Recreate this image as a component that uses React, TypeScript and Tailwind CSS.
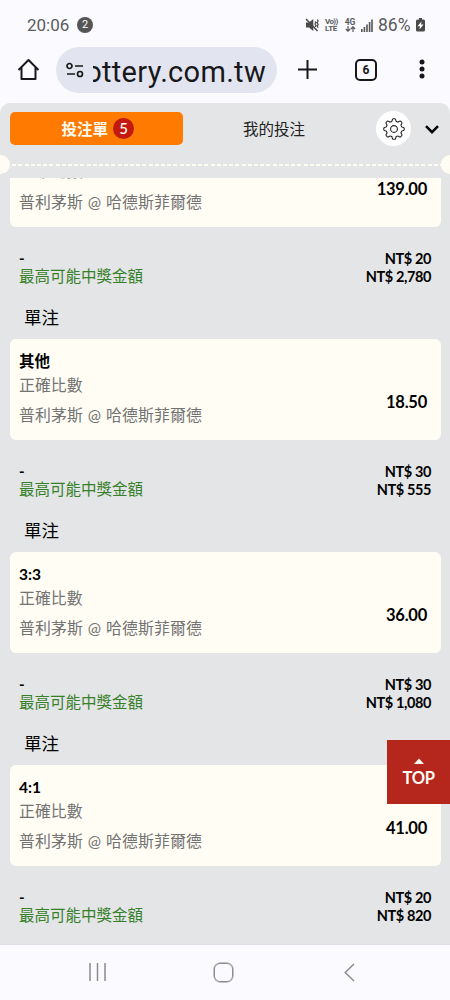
type Bet = {
  pick?: string
  odds: string
  stake: string
  payout: string
}

const bets: Bet[] = [
  { odds: '139.00', stake: 'NT$ 20', payout: 'NT$ 2,780' },
  { pick: '其他', odds: '18.50', stake: 'NT$ 30', payout: 'NT$ 555' },
  { pick: '3:3', odds: '36.00', stake: 'NT$ 30', payout: 'NT$ 1,080' },
  { pick: '4:1', odds: '41.00', stake: 'NT$ 20', payout: 'NT$ 820' },
]

function StatusBar() {
  return (
    <div className="flex h-[47px] items-center justify-between pt-[3px] pr-[25px] pl-[27px] font-['Roboto',sans-serif] text-[#5a5a5a]">
      <div className="flex items-center gap-[6px]">
        <span className="w-[44px] text-[17px] leading-[20px] whitespace-nowrap">20:06</span>
        <span className="flex h-4 w-4 items-center justify-center rounded-full bg-[#555] text-[11px] text-white">2</span>
      </div>
      <div className="flex items-center">
        <svg className="mr-[6px]" width="14" height="14" viewBox="0 0 14 14" fill="none" stroke="#4a4a4a" strokeWidth="1.2">
          <path d="M1 4.5h3L8.3 1v12L4 9.5H1z" fill="#4a4a4a" stroke="none" />
          <path d="M1 1l11.5 12" strokeWidth="1.5" />
          <path d="M10 3.5l1 1.2-1 1.3 1 1.4-1 1.4M12.2 1.5l1 1.6-1 1.6 1 1.7-1 1.7 1 1.6" />
        </svg>
        <div className="mr-[5px] w-[14px] text-[8px] leading-[7px] font-bold">
          <div className="tracking-[-0.6px] whitespace-nowrap">Vo))</div>
          <div className="tracking-[-0.3px]">LTE</div>
        </div>
        <div className="mr-[5px] flex w-[12px] flex-col items-center text-[8.5px] leading-[8px] font-bold">
          4G
          <svg width="11" height="6" viewBox="0 0 11 6" fill="none" stroke="#5a5a5a" strokeWidth="1.2">
            <path d="M3 0v5M.8 3L3 5.2 5.2 3M8 6V1M5.8 3L8 .8 10.2 3" />
          </svg>
        </div>
        <svg className="mr-[5px]" width="12" height="13" viewBox="0 0 12 13" fill="#555">
          <path d="M0 10h1.6v3H0zM2.6 8h1.6v5H2.6zM5.2 5.5h1.6V13H5.2zM7.8 3h1.6v10H7.8zM10.2 0.5h1.6V13h-1.6z" />
        </svg>
        <span className="w-[38px] text-[17.5px] leading-[20px] whitespace-nowrap">86%</span>
        <svg width="9" height="14" viewBox="0 0 9 14">
          <path d="M3 0h3v1.5h1.5Q9 1.500 9 3v9q0 1.500-1.500 1.500h-6Q0 13.500 0 12V3q0-1.500 1.500-1.500H3z" fill="#4a4a4a" />
          <path d="M5.500 3.500L1.500 8.300h2.500L3.500 11.500l4-4.900H5z" fill="#fff" />
        </svg>
      </div>
    </div>
  )
}

function BrowserBar() {
  return (
    <div className="flex h-[56px] items-start text-[#18181b]">
      <svg className="mt-[11px] ml-[17px]" width="23" height="23" viewBox="0 0 23 23" fill="none" stroke="currentColor" strokeWidth="2" strokeLinejoin="round">
        <path d="M1.500 12L11.500 2l10 10M4.500 9.500V21h14V9.500" />
      </svg>
      <div className="ml-[16px] flex h-[46px] w-[221px] items-center rounded-full bg-[#e2e5ef] pl-[10px]">
        <svg width="18" height="16" viewBox="0 0 18 16" fill="none" stroke="currentColor" strokeWidth="1.7">
          <circle cx="3.500" cy="4" r="2.500" />
          <path d="M9 4h8M1 12h8" />
          <circle cx="14" cy="12" r="2.500" />
        </svg>
        <div className="ml-[9px] flex w-[173px] justify-end overflow-hidden pt-[4px] font-['Roboto',sans-serif] text-[29px] leading-[36px]">
          <span className="tracking-[0.3px]">ottery.com.tw</span>
        </div>
      </div>
      <svg className="mt-[13px] ml-[21px]" width="19" height="19" viewBox="0 0 19 19" stroke="currentColor" strokeWidth="2">
        <path d="M9.500 0v19M0 9.500h19" />
      </svg>
      <div className="mt-[12px] ml-[38px] flex h-[22px] w-[22px] items-center justify-center rounded-[5px] border-2 border-current font-['Roboto',sans-serif] text-[12px] font-bold">
        6
      </div>
      <svg className="mt-[12px] ml-[42px]" width="6" height="20" viewBox="0 0 6 20" fill="currentColor">
        <circle cx="3" cy="3" r="2.500" />
        <circle cx="3" cy="10" r="2.500" />
        <circle cx="3" cy="17" r="2.500" />
      </svg>
    </div>
  )
}

function Gear() {
  const teeth = [0, 45, 90, 135, 180, 225, 270, 315]
  return (
    <svg width="22" height="22" viewBox="-11 -11 22 22" fill="none" stroke="#222" strokeWidth="1.1">
      {teeth.map((angle) => (
        <path
          key={angle}
          transform={`rotate(${angle})`}
          d="M-3.100-7.500C-2.200-7.200-1.900-7.900-1.800-8.800Q-1.600-10.200-.8-10.200H.8Q1.600-10.200 1.800-8.800C1.900-7.900 2.200-7.200 3.100-7.500"
        />
      ))}
      <circle r="3.400" />
    </svg>
  )
}

function SlipTabs() {
  return (
    <div className="flex h-[51px] items-center pl-[9.5px] text-[15.5px]">
      <div className="flex h-[33px] w-[173.5px] items-center justify-center gap-[5px] rounded-[5px] bg-[#ff7a00] pl-[3px] font-bold text-[#fffdf3]">
        <span className="pt-[2px]">投注單</span>
        <span className="flex h-[21px] w-[21px] items-center justify-center rounded-full bg-[#c4190f] text-[15px] font-medium">5</span>
      </div>
      <div className="w-[182px] pt-[3px] text-center text-[#222]">我的投注</div>
      <div className="ml-[11px] flex h-[35px] w-[35px] items-center justify-center rounded-full bg-white">
        <Gear />
      </div>
      <svg className="mt-[2px] ml-[14px]" width="14" height="9" viewBox="0 0 14 9" fill="none" stroke="#000" strokeWidth="2.5">
        <path d="M1 1.200l6 6 6-6" />
      </svg>
    </div>
  )
}

function Perforation() {
  return (
    <div className="flex h-5 items-center justify-between">
      <div className="h-[19px] w-[10px] rounded-r-full bg-[#fffdf3]" />
      <div className="mt-px h-[2px] flex-1 bg-[repeating-linear-gradient(90deg,transparent_0,transparent_2.2px,#fffdf3_2.2px,#fffdf3_6.2px)]" />
      <div className="h-[19px] w-[9px] rounded-l-full bg-[#fffdf3]" />
    </div>
  )
}

function BetItem({ bet, last }: { bet: Bet; last: boolean }) {
  return (
    <div className="shrink-0">
      <div className="mx-[9.5px] flex h-[101px] justify-between rounded-[6px] bg-[#fffdf4] pr-[13.5px] pl-[9.5px]">
        <div className={bet.pick ? 'pt-[11px]' : 'pt-[33px]'}>
          {bet.pick && <div className="h-[23px] text-[15.5px] leading-[23px] font-bold text-black">{bet.pick}</div>}
          <div className="h-[24px] text-[15.9px] leading-[24px] text-[#737373]">正確比數</div>
          <div className={`${bet.pick ? 'mt-[6px]' : 'mt-[7px]'} text-[15.9px] leading-[24px] tracking-[0.1px] text-[#737373] [word-spacing:0.7px]`}>
            普利茅斯 @ 哈德斯菲爾德
          </div>
        </div>
        <div className="self-center pt-[24px] text-[16.5px] leading-[24px] font-bold tracking-[-0.25px] text-black">{bet.odds}</div>
      </div>
      <div className="flex justify-between pt-[22px] pr-[19px] pl-[19px] text-[15px] leading-[18px] font-bold text-black">
        <div>
          <div>-</div>
          <div className="text-[15.5px] font-normal text-[#37802a]">最高可能中獎金額</div>
        </div>
        <div className="-mb-px pt-px text-right text-[14.5px] tracking-[-0.4px]">
          <div>{bet.stake}</div>
          <div>{bet.payout}</div>
        </div>
      </div>
      {!last && <div className="mt-[18.5px] mb-[7.5px] pl-[24px] text-[17.5px] leading-[28px] text-black">單注</div>}
    </div>
  )
}

function NavBar() {
  return (
    <div className="flex h-[56px] items-center border-t border-[#dedfe8] bg-[#fbfaff] pb-px pl-[89px]">
      <svg width="17" height="18" viewBox="0 0 17 18" stroke="#8c8c8c" strokeWidth="1.5">
        <path d="M1 0v18M8.500 0v18M16 0v18" />
      </svg>
      <div className="ml-[108px] h-[19px] w-[19px] rounded-[6px] border-[1.5px] border-[#8c8c8c] ring-[0.5px] ring-[#8c8c8c]" />
      <svg className="ml-[111px]" width="11" height="19" viewBox="0 0 11 19" fill="none" stroke="#8c8c8c" strokeWidth="1.5">
        <path d="M10 1L1.200 9.500 10 18" />
      </svg>
    </div>
  )
}

function App() {
  return (
    <div className="relative flex h-[1000px] w-[450px] flex-col overflow-hidden bg-[#fbfaff] font-['Lato','Noto_Sans_CJK_TC',sans-serif]">
      <StatusBar />
      <BrowserBar />
      <main className="flex h-[841px] flex-col rounded-t-[10px] bg-[#e4e5e7]">
        <SlipTabs />
        <Perforation />
        <div className="mt-[4px] flex min-h-0 flex-1 flex-col overflow-hidden">
          <div className="-mt-[52px] flex flex-col">
            {bets.map((bet, i) => (
              <BetItem key={bet.odds} bet={bet} last={i === bets.length - 1} />
            ))}
          </div>
        </div>
      </main>
      <NavBar />
      <button className="absolute top-[740px] right-0 flex h-[63.5px] w-[63px] flex-col items-center bg-[#b5261d] pt-[18px] text-[16.5px] leading-[20px] font-bold text-[#fffdf4]">
        <svg width="10" height="6" viewBox="0 0 10 6" fill="currentColor">
          <path d="M0 6l5-5.500L10 6z" />
        </svg>
        <span className="mt-[4px] tracking-[-0.3px]">TOP</span>
      </button>
    </div>
  )
}

export default App
